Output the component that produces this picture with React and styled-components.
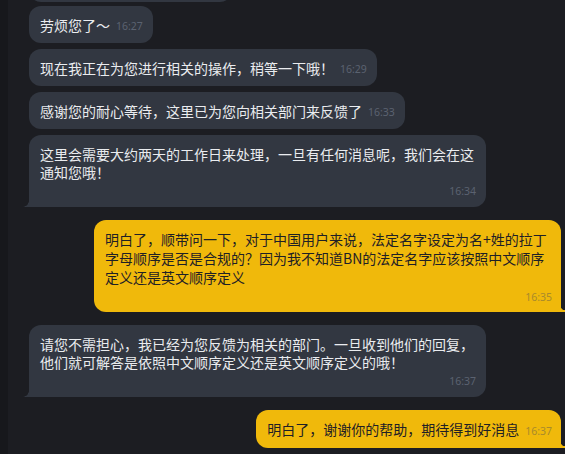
import React from "react";
import styled, { createGlobalStyle, css } from "styled-components";

const GlobalStyle = createGlobalStyle`
  html, body {
    margin: 0;
    padding: 0;
    background: #1c1d22;
    overflow: hidden;
  }
  body {
    font-family: "Noto Sans CJK SC", "Noto Sans", sans-serif;
  }
`;

const Screen = styled.div`
  width: 565px;
  height: 454px;
  overflow: hidden;
  background: #1c1d22;
  border-left: 8px solid #17181c;
  box-sizing: border-box;
`;

const Feed = styled.div`
  display: flex;
  flex-direction: column;
  padding: 0 4px 0 21px;
`;

const Row = styled.div`
  display: flex;
  justify-content: ${(p) => (p.$mine ? "flex-end" : "flex-start")};
  margin-top: ${(p) => (p.$newGroup ? "13px" : "6px")};
  &:first-child {
    margin-top: -36px;
  }
  &:nth-child(2) {
    margin-top: 4px;
  }
`;

const Bubble = styled.div`
  position: relative;
  box-sizing: border-box;
  max-width: ${(p) => (p.$mine ? "467px" : "457px")};
  padding: 10px ${(p) => (p.$mine ? "9px" : "10px")}
    ${(p) => (p.$stacked ? (p.$mine ? "7px" : "8px") : "9px")} 11px;
  border-radius: 12px;
  background: ${(p) => (p.$mine ? "#f0b90b" : "#323741")};
  color: ${(p) => (p.$mine ? "#1e2026" : "#eaecef")};
  font-size: 14px;
  line-height: 18px;
  display: flex;
  flex-direction: ${(p) => (p.$stacked ? "column" : "row")};
  align-items: ${(p) => (p.$stacked ? "stretch" : "flex-end")};

  ${(p) =>
    p.$tail &&
    !p.$mine &&
    css`
      border-bottom-left-radius: 0;
      &::before {
        content: "";
        position: absolute;
        left: -6px;
        bottom: 0;
        width: 6px;
        height: 6px;
        background: radial-gradient(circle at 0 0, transparent 5.5px, #323741 6px);
      }
    `}

  ${(p) =>
    p.$tail &&
    p.$mine &&
    css`
      border-bottom-right-radius: 0;
      &::after {
        content: "";
        position: absolute;
        right: -4px;
        bottom: 0;
        width: 4px;
        height: 6px;
        background: radial-gradient(circle at 100% 0, transparent 4px, #f0b90b 4.5px);
      }
    `}
`;

/* the previous message, scrolled almost out of view */
const ClippedBubble = styled.div`
  width: 203px;
  height: 38px;
  border-radius: 12px;
  background: #323741;
`;

const Text = styled.div`
  line-height: ${(p) => (p.$mine ? "19px" : "18px")};
  word-break: break-all;
`;

const Time = styled.span`
  font-family: "Noto Sans", "Open Sans", sans-serif;
  font-size: 10.5px;
  line-height: 18px;
  height: 18px;
  color: ${(p) => (p.$mine ? "#a88a2c" : "#5b6270")};
  margin-left: 6px;
  white-space: nowrap;
  align-self: ${(p) => (p.$stacked ? "flex-end" : "auto")};
  position: relative;
  top: 1px;
`;

const messages = [
  { text: "劳烦您了～", time: "16:27" },
  { text: "现在我正在为您进行相关的操作，稍等一下哦！", time: "16:29" },
  { text: "感谢您的耐心等待，这里已为您向相关部门来反馈了", time: "16:33" },
  {
    text: "这里会需要大约两天的工作日来处理，一旦有任何消息呢，我们会在这通知您哦！",
    time: "16:34",
    stacked: true,
    tail: true,
  },
  {
    mine: true,
    text: "明白了，顺带问一下，对于中国用户来说，法定名字设定为名+姓的拉丁字母顺序是否是合规的？因为我不知道BN的法定名字应该按照中文顺序定义还是英文顺序定义",
    time: "16:35",
    stacked: true,
    tail: true,
    newGroup: true,
  },
  {
    text: "请您不需担心，我已经为您反馈为相关的部门。一旦收到他们的回复，他们就可解答是依照中文顺序定义还是英文顺序定义的哦！",
    time: "16:37",
    stacked: true,
    tail: true,
    newGroup: true,
  },
  {
    mine: true,
    text: "明白了，谢谢你的帮助，期待得到好消息",
    time: "16:37",
    tail: true,
    newGroup: true,
  },
];

export default function App() {
  return (
    <>
      <GlobalStyle />
      <Screen>
        <Feed>
          <Row>
            <ClippedBubble />
          </Row>
          {messages.map((m, i) => (
            <Row key={i} $mine={m.mine} $newGroup={m.newGroup}>
              <Bubble $mine={m.mine} $stacked={m.stacked} $tail={m.tail}>
                <Text $mine={m.mine}>{m.text}</Text>
                <Time $mine={m.mine} $stacked={m.stacked}>
                  {m.time}
                </Time>
              </Bubble>
            </Row>
          ))}
        </Feed>
      </Screen>
    </>
  );
}
